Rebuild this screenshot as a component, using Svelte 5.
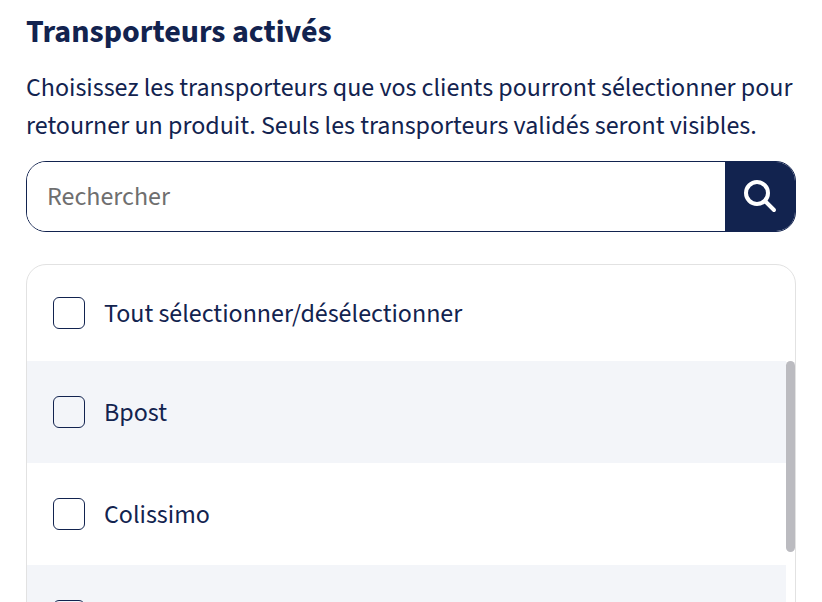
<script>
  let search = $state('')

  let carriers = $state([
    { id: 'bpost', name: 'Bpost', enabled: false },
    { id: 'colissimo', name: 'Colissimo', enabled: false },
    { id: 'chronopost', name: 'Chronopost', enabled: false },
    { id: 'dhl', name: 'DHL', enabled: false },
    { id: 'dpd', name: 'DPD', enabled: false },
    { id: 'gls', name: 'GLS', enabled: false },
    { id: 'mondial-relay', name: 'Mondial Relay', enabled: false },
    { id: 'ups', name: 'UPS', enabled: false },
  ])

  const filtered = $derived(
    carriers.filter(c => c.name.toLowerCase().includes(search.trim().toLowerCase()))
  )
  const allEnabled = $derived(carriers.every(c => c.enabled))

  const toggleAll = () => {
    const enabled = !allEnabled
    carriers.forEach(c => c.enabled = enabled)
  }

  // scroll thumb, in % of the list height
  let list
  let thumb = $state({ top: 0, size: 100 })

  const updateThumb = () => {
    thumb = {
      top: list.scrollTop / list.scrollHeight * 100,
      size: list.clientHeight / list.scrollHeight * 100,
    }
  }

  $effect(() => {
    filtered.length
    updateThumb()
  })
</script>

<main>
  <h2>Transporteurs activés</h2>
  <p>Choisissez les transporteurs que vos clients pourront sélectionner pour retourner un produit. Seuls les transporteurs validés seront visibles.</p>

  <form class="search" role="search" onsubmit={e => e.preventDefault()}>
    <input type="text" placeholder="Rechercher" aria-label="Rechercher" bind:value={search}>
    <button type="submit" aria-label="Rechercher">
      <svg viewBox="0 0 34 34" width="34" height="34" fill="none" stroke="currentColor" stroke-width="4">
        <circle cx="14" cy="13" r="11" />
        <path d="M22 21 L31 30" stroke-linecap="round" />
      </svg>
    </button>
  </form>

  <div class="carriers">
    <label class="row all">
      <input type="checkbox" checked={allEnabled} onchange={toggleAll}>
      <span>Tout sélectionner/désélectionner</span>
    </label>

    <div class="scroll">
      <ul bind:this={list} onscroll={updateThumb}>
        {#each filtered as carrier (carrier.id)}
          <li>
            <label class="row">
              <input type="checkbox" bind:checked={carrier.enabled}>
              <span>{carrier.name}</span>
            </label>
          </li>
        {/each}
      </ul>
      {#if thumb.size < 100}
        <div class="thumb" style="top: {thumb.top}%; height: {thumb.size}%"></div>
      {/if}
    </div>
  </div>
</main>

<style>
  :global(body) {
    margin: 0;
    background: #fff;
  }
  main {
    padding: 11px 26px 26px;
    color: #12234f;
    font-family: 'Source Sans 3', 'Source Sans Pro', 'Noto Sans CJK JP', 'Noto Sans', sans-serif;
    font-size: 26px;
  }
  h2 {
    margin: 0 0 16px;
    font-size: 32px;
    font-weight: 700;
    line-height: 42px;
  }
  p {
    margin: 0 0 16px;
    line-height: 38px;
  }
  .search {
    display: flex;
    height: 71px;
    box-sizing: border-box;
    margin-bottom: 32px;
    border: 1px solid #12234f;
    border-radius: 20px;
    overflow: hidden;
  }
  .search input {
    flex: 1;
    min-width: 0;
    padding: 0 20px;
    border: 0;
    outline: 0;
    background: #fff;
    color: inherit;
    font: inherit;
  }
  .search input::placeholder {
    color: #6f6f6f;
    opacity: 1;
  }
  .search button {
    display: flex;
    align-items: center;
    justify-content: center;
    width: 70px;
    padding: 0;
    border: 0;
    background: #12234f;
    color: #fff;
    cursor: pointer;
  }
  .carriers {
    border: 1px solid #e2e2e2;
    border-radius: 20px;
    overflow: hidden;
  }
  .scroll {
    position: relative;
  }
  ul {
    height: 395px;
    margin: 0;
    padding: 0 9px 0 0;
    list-style: none;
    overflow-y: scroll;
    scrollbar-width: none;
  }
  .thumb {
    position: absolute;
    right: 0;
    width: 9px;
    border-radius: 5px;
    background: #bbbbc0;
    pointer-events: none;
  }
  li:nth-child(odd) {
    background: #f3f5f9;
  }
  .row {
    display: flex;
    align-items: center;
    gap: 19px;
    height: 102px;
    padding: 0 26px;
    cursor: pointer;
  }
  .row.all {
    height: 96px;
  }
  .row input {
    appearance: none;
    flex: none;
    width: 32px;
    height: 32px;
    margin: 0;
    border: 1px solid #12234f;
    border-radius: 6px;
    cursor: pointer;
  }
  .row input:checked {
    background: #12234f;
    box-shadow: inset 0 0 0 6px #fff;
  }
</style>
